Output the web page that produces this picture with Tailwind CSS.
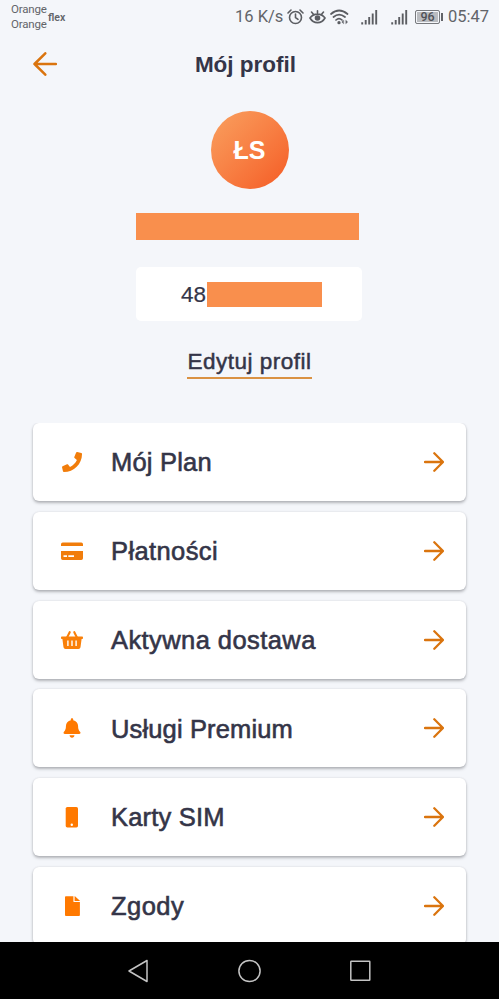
<!DOCTYPE html>
<html lang="pl">
<head>
<meta charset="utf-8">
<meta name="viewport" content="width=device-width, initial-scale=1">
<title>Mój profil</title>
<script src="https://cdn.jsdelivr.net/npm/@tailwindcss/browser@4"></script>
</head>
<body class="bg-[#f4f6fa]">
<svg class="hidden">
  <symbol id="arrow" viewBox="0 0 20 20"><path d="M1 10H18.5M10.3 1.3L19 10L10.3 18.7" fill="none" stroke="#da740e" stroke-width="2.3" stroke-linecap="round" stroke-linejoin="round"/></symbol>
  <symbol id="signal" viewBox="0 0 17 16"><path d="M1.2 13.2V15.5M4.7 11V15.5M8.2 8V15.5M11.7 4.5V15.5M15.2 1V15.5" fill="none" stroke="#5b5d62" stroke-width="1.9"/></symbol>
</svg>
<div class="flex h-[999px] w-[499px] flex-col overflow-hidden font-['Liberation_Sans',Arial,sans-serif] text-[#343548]">
  <header class="flex h-9 shrink-0 items-start text-[#626469] font-[Roboto,sans-serif]">
    <div class="ml-[11px] mt-[2px] w-[37px] text-[11.5px] leading-[15px] tracking-[-0.2px]"><div>Orange</div><div>Orange</div></div>
    <div class="mt-[10px] w-[187px] text-[10.5px] font-semibold leading-[15px]">flex</div>
    <div class="flex h-[34px] items-center">
      <span class="w-[52px] whitespace-nowrap text-[16.5px]">16 K/s</span>
      <svg class="h-4 w-[17px]" viewBox="0 0 17 16" fill="none" stroke="#5b5d62" stroke-width="1.6" stroke-linecap="round"><circle cx="8.5" cy="8.5" r="6"/><path d="M8.5 5V8.5L11 10.3M1 4L4 1M16 4L13 1"/></svg>
      <svg class="ml-[5px] h-4 w-[17px]" viewBox="0 0 17 16" fill="none" stroke="#5b5d62" stroke-width="1.6" stroke-linecap="round"><path d="M1 9C4.5 3.8 12.5 3.8 16 9C12.5 15.2 4.5 15.2 1 9ZM2.5 3L4.2 5M8.5 1.7V4M14.5 3L12.8 5"/><circle cx="8.5" cy="9" r="2" fill="#5b5d62"/></svg>
      <svg class="ml-[4px] h-4 w-[19px]" viewBox="0 0 19 16" fill="none" stroke="#5b5d62" stroke-width="1.7" stroke-linecap="round"><path d="M1 5Q9 -2 17.5 5M3.5 8Q9 3.2 15 8M6 11Q9 8.2 12 11"/><circle cx="9" cy="13.7" r=".8" fill="#5b5d62"/><path d="M13.4 11.5L11.8 13L13.4 14.5ZM16 11.5L17.6 13L16 14.5Z" fill="#5b5d62" stroke-width=".5"/></svg>
      <svg class="ml-[12px] h-4 w-[17px]"><use href="#signal"/></svg>
      <svg class="ml-[13px] h-4 w-[17px]"><use href="#signal"/></svg>
      <span class="ml-[7px] flex h-[14px] w-[25px] items-center justify-center rounded-[2px] border border-[#77797d] bg-[#babcc0] text-[12.5px] font-medium leading-none text-[#505257] shadow-[inset_0_0_0_1px_#f4f6fa]">96</span>
      <span class="ml-px h-[8px] w-[2px] bg-[#626469]"></span>
      <span class="ml-[5px] whitespace-nowrap text-[16.5px]">05:47</span>
    </div>
  </header>
  <div class="grid h-[55px] shrink-0 grid-cols-[1fr_auto_1fr] items-center pl-[33px] pr-[41px]">
    <svg class="h-6 w-6" viewBox="0 0 24 24" fill="none" stroke="#da740e" stroke-width="2.5" stroke-linecap="round" stroke-linejoin="round"><path d="M23 12H1.5M12.3 1.3L1.5 12L12.3 22.7"/></svg>
    <h1 class="pt-[3px] text-[22.5px] font-bold leading-6"><span>Mój profil</span></h1>
  </div>
  <section class="flex shrink-0 flex-col items-center pt-5">
    <div class="flex h-[78px] w-[78px] items-center justify-center rounded-full bg-linear-to-br from-[#f9a05f] to-[#f45a22] pt-[2px] text-[25px] font-bold text-white"><span>ŁS</span></div>
    <div class="mr-1 mt-6 h-[27px] w-[223px] bg-[#f98f4d]"></div>
    <div class="mr-px mt-[27px] flex h-[54px] w-[226px] items-center rounded-[5px] bg-white pl-[45px] text-[22.5px]"><span class="w-[26px] whitespace-nowrap pt-[2px] [-webkit-text-stroke:0.2px_#343548]">48</span><span class="h-[25px] w-[115px] bg-[#f98f4d]"></span></div>
    <a class="mt-[26px] h-[32px] whitespace-nowrap border-b-2 border-[#da9243] text-[22.5px] leading-[29px] tracking-[0.5px] [-webkit-text-stroke:0.5px_#343548]"><span>Edytuj profil</span></a>
  </section>
  <main class="mt-[44px] flex min-h-0 flex-1 flex-col gap-[10.8px] overflow-hidden px-[33px] text-[25.5px] [-webkit-text-stroke:0.6px_#343548]">
    <a class="flex h-[78px] shrink-0 items-center rounded-[6px] bg-white pl-7 pr-[22px] shadow-[0_2px_3px_rgba(60,62,68,0.35),0_0_2px_rgba(60,62,68,0.15)]">
      <svg class="mr-[28px] h-[22px] w-[22px]" viewBox="0 0 22 22"><path transform="translate(1 1) scale(.0391)" fill="#f17d0b" d="M493.4 24.6l-104-24c-11.3-2.6-22.9 3.3-27.5 13.9l-48 112c-4.2 9.8-1.4 21.3 6.9 28l60.6 49.6c-36 76.7-98.9 140.5-177.2 177.2l-49.6-60.6c-6.8-8.3-18.2-11.1-28-6.9l-112 48C3.9 366.5-2 378.1.6 389.4l24 104C27.1 504.2 36.7 512 48 512c256.1 0 464-207.5 464-464 0-11.2-7.7-20.9-18.6-23.4z"/></svg>
      <span class="flex-1 whitespace-nowrap tracking-[0.2px]"><span>Mój Plan</span></span><svg class="h-5 w-5"><use href="#arrow"/></svg>
    </a>
    <a class="flex h-[78px] shrink-0 items-center rounded-[6px] bg-white pl-7 pr-[22px] shadow-[0_2px_3px_rgba(60,62,68,0.35),0_0_2px_rgba(60,62,68,0.15)]">
      <svg class="mr-[28px] h-[22px] w-[22px]" viewBox="0 0 22 22"><path fill="#f17d0b" fill-rule="evenodd" d="M1.7 2.5H20.3Q22 2.5 22 4.2V6H0V4.2Q0 2.5 1.7 2.5ZM0 11H22V18.3Q22 20 20.3 20H1.7Q0 20 0 18.3ZM2.5 15.2V17H6V15.2ZM7.3 15.2V17H13V15.2Z"/></svg>
      <span class="flex-1 whitespace-nowrap tracking-[0.4px]"><span>Płatności</span></span><svg class="h-5 w-5"><use href="#arrow"/></svg>
    </a>
    <a class="flex h-[78px] shrink-0 items-center rounded-[6px] bg-white pl-7 pr-[22px] shadow-[0_2px_3px_rgba(60,62,68,0.35),0_0_2px_rgba(60,62,68,0.15)]">
      <svg class="mr-[28px] h-[22px] w-[22px]" viewBox="0 0 22 22"><path d="M8.7 3.2L5.8 9M13.3 3.2L16.2 9" stroke="#f9800a" stroke-width="2.1" stroke-linecap="round"/><path fill="#f9800a" fill-rule="evenodd" d="M.8 7.6H21.2Q22 7.6 22 8.4V9.3Q22 10.1 21.2 10.1H20.6L19.5 18.2Q19.2 20 17.5 20H4.5Q2.8 20 2.5 18.2L1.4 10.1H.8Q0 10.1 0 9.3V8.4Q0 7.6 .8 7.6ZM6.2 11.5V17H7.6V11.5ZM10.3 11.5V17H11.7V11.5ZM14.4 11.5V17H15.8V11.5Z"/></svg>
      <span class="flex-1 whitespace-nowrap pt-px tracking-[0.42px]"><span>Aktywna dostawa</span></span><svg class="h-5 w-5"><use href="#arrow"/></svg>
    </a>
    <a class="flex h-[78px] shrink-0 items-center rounded-[6px] bg-white pl-7 pr-[22px] shadow-[0_2px_3px_rgba(60,62,68,0.35),0_0_2px_rgba(60,62,68,0.15)]">
      <svg class="mr-[28px] h-[22px] w-[22px]" viewBox="0 0 22 22"><path transform="translate(2.5 1.2) scale(.038)" fill="#ff7900" d="M224 512c35.32 0 63.97-28.65 63.97-64H160.03c0 35.35 28.65 64 63.97 64zm215.39-149.71c-19.32-20.76-55.47-51.99-55.47-154.29 0-77.7-54.48-139.9-127.94-155.16V32c0-17.67-14.32-32-31.98-32s-31.98 14.33-31.98 32v20.84C118.56 68.1 64.08 130.3 64.08 208c0 102.3-36.15 133.53-55.47 154.29-6 6.45-8.66 14.16-8.61 21.71.11 16.4 12.98 32 32.1 32h383.8c19.12 0 32-15.6 32.1-32 .05-7.55-2.61-15.27-8.61-21.71z"/></svg>
      <span class="flex-1 whitespace-nowrap pt-px tracking-[0.14px]"><span>Usługi Premium</span></span><svg class="h-5 w-5"><use href="#arrow"/></svg>
    </a>
    <a class="flex h-[78px] shrink-0 items-center rounded-[6px] bg-white pl-7 pr-[22px] shadow-[0_2px_3px_rgba(60,62,68,0.35),0_0_2px_rgba(60,62,68,0.15)]">
      <svg class="mr-[28px] h-[22px] w-[22px]" viewBox="0 0 22 22"><rect x="4.7" y="1" width="12.3" height="20.4" rx="1.6" fill="#ff7900"/><circle cx="10.8" cy="18.7" r="1.2" fill="white"/></svg>
      <span class="flex-1 whitespace-nowrap tracking-[0.2px]"><span>Karty SIM</span></span><svg class="h-5 w-5"><use href="#arrow"/></svg>
    </a>
    <a class="flex h-[78px] shrink-0 items-center rounded-[6px] bg-white pl-7 pr-[22px] shadow-[0_2px_3px_rgba(60,62,68,0.35),0_0_2px_rgba(60,62,68,0.15)]">
      <svg class="mr-[28px] h-[22px] w-[22px]" viewBox="0 0 22 22"><path fill="#ff7900" d="M4.9 1.2H12.4V6.2Q12.4 7.1 13.3 7.1H18.9V20.1Q18.9 21 18 21H4.9Q4 21 4 20.1V2.1Q4 1.2 4.9 1.2ZM13.6 1.2H14L18.9 5.8V6H13.6Z"/></svg>
      <span class="flex-1 whitespace-nowrap tracking-[0.45px]"><span>Zgody</span></span><svg class="h-5 w-5"><use href="#arrow"/></svg>
    </a>
  </main>
  <nav class="flex h-[57px] shrink-0 items-center justify-center gap-[87px] bg-black">
    <svg class="h-6 w-6" viewBox="0 0 24 24" fill="none" stroke="#c4c4c4" stroke-width="1.5" stroke-linejoin="round"><path d="M2 12L20 1.5V22.5Z"/></svg>
    <svg class="h-6 w-6" viewBox="0 0 24 24" fill="none" stroke="#c4c4c4" stroke-width="1.5"><circle cx="11.5" cy="12" r="10.6"/></svg>
    <svg class="h-6 w-6" viewBox="0 0 24 24" fill="none" stroke="#c4c4c4" stroke-width="1.5"><rect x="1.8" y="2.2" width="19" height="19" rx=".5"/></svg>
  </nav>
</div>
</body>
</html>
